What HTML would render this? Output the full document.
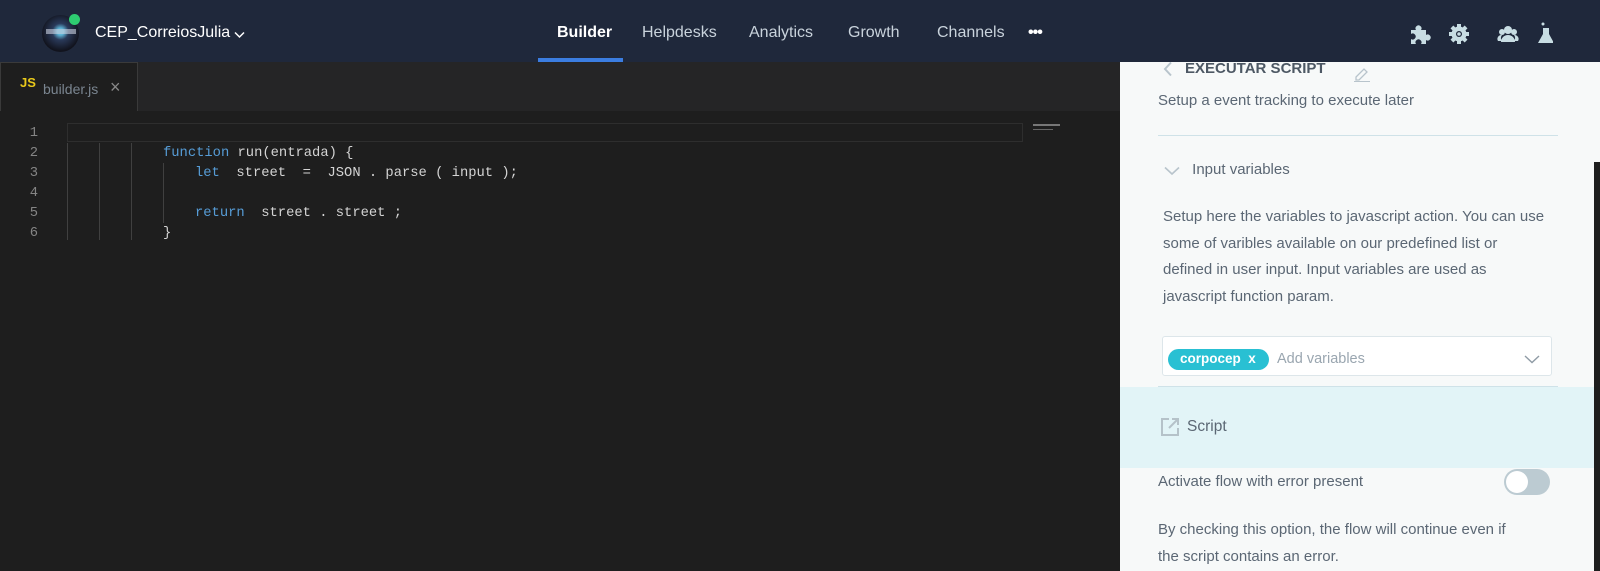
<!DOCTYPE html>
<html><head><meta charset="utf-8"><style>
*{margin:0;padding:0;box-sizing:border-box}
body{width:1600px;height:571px;overflow:hidden;background:#1e1e1e;font-family:"Liberation Sans",sans-serif;position:relative}
.a{position:absolute;white-space:nowrap}
.hdr{left:0;top:0;width:1600px;height:62px;background:#1f283b}
.nav{top:24px;font-size:16px;color:#c9d3dc}
.mono{font-family:"Liberation Mono",monospace;font-size:13.8px;color:#d4d4d4;white-space:pre}
.ln{color:#858585;width:24px;text-align:right;left:14px}
.kw{color:#569cd6}
.g{width:1px;background:#404040}
.p{color:#5b6774;font-size:15px}
</style></head><body>
<div class="a hdr"></div>
<div class="a" style="left:42px;top:15px;width:37px;height:37px;border-radius:50%;background:radial-gradient(circle at 50% 45%,#5fb6d8 0 12%,#2a3a5a 30%,#11131d 70%)"></div>
<div class="a" style="left:46px;top:29px;width:30px;height:5px;background:#c9d0e0;opacity:.6"></div>
<div class="a" style="left:69px;top:14px;width:11px;height:11px;border-radius:50%;background:#2ecc71"></div>
<div class="a" style="left:95px;top:24px;font-size:16px;color:#fff">CEP_CorreiosJulia</div>
<svg class="a" style="left:234px;top:31px" width="11" height="8"><path d="M1 1.5 L5.5 6 L10 1.5" stroke="#fff" stroke-width="1.5" fill="none"/></svg>
<div class="a nav" style="left:557px;color:#fff;font-weight:bold">Builder</div>
<div class="a" style="left:538px;top:58px;width:85px;height:4px;background:#3b7de0"></div>
<div class="a nav" style="left:642px">Helpdesks</div>
<div class="a nav" style="left:749px">Analytics</div>
<div class="a nav" style="left:848px">Growth</div>
<div class="a nav" style="left:937px">Channels</div>
<div class="a" style="left:1028px;top:24px;color:#fff;font-size:16px;font-weight:bold;letter-spacing:-1px">•••</div>
<!-- icons -->
<svg class="a" style="left:1408px;top:22px" width="145" height="24" fill="#c8dde3">
<path d="M3 8h5a3 3 0 1 1 5 0h5v5a3 3 0 1 1 0 5v4h-5a3 3 0 1 0-5 0H3v-5a3 3 0 1 0 0-5z"/>
<g transform="translate(51,12)"><circle r="7.5"/><g><rect x="-2" y="-10" width="4" height="20"/><rect x="-10" y="-2" width="20" height="4"/><rect x="-2" y="-10" width="4" height="20" transform="rotate(45)"/><rect x="-2" y="-10" width="4" height="20" transform="rotate(-45)"/></g><circle r="3" fill="#1f283b"/><circle r="1.8"/></g>
<g transform="translate(90,0)"><circle cx="10" cy="8" r="4"/><circle cx="4" cy="10" r="3"/><circle cx="16" cy="10" r="3"/><path d="M3 20a7 7 0 0 1 14 0z"/><path d="M0 19a4 4 0 0 1 4-6 5 5 0 0 0 0 6z"/><path d="M20 19a4 4 0 0 0-4-6 5 5 0 0 1 0 6z"/></g>
<g transform="translate(130,0)"><circle cx="5" cy="2" r="1.5"/><path d="M5 6h6v6l5 9H0l5-9z"/></g>
</svg>
<!-- editor tabs -->
<div class="a" style="left:0;top:62px;width:1120px;height:49px;background:#252526"></div>
<div class="a" style="left:0;top:62px;width:138px;height:49px;background:#1e1e1e;border:1px solid #3a3a3a;border-bottom:none"></div>
<div class="a" style="left:20px;top:75px;color:#e8c81a;font-weight:bold;font-size:13px">JS</div>
<div class="a" style="left:43px;top:81px;color:#7a8590;font-size:14px">builder.js</div>
<div class="a" style="left:110px;top:77px;color:#888;font-size:18px">×</div>
<div class="a" style="left:67px;top:123px;width:956px;height:19px;border:1px solid #2e2e2e"></div>
<div class="a g" style="left:67px;top:143px;height:97px"></div>
<div class="a g" style="left:99px;top:143px;height:97px"></div>
<div class="a g" style="left:131px;top:143px;height:97px"></div>
<div class="a g" style="left:163px;top:163px;height:60px"></div>
<div class="a mono ln" style="top:126px">1</div>
<div class="a mono ln" style="top:146px">2</div>
<div class="a mono ln" style="top:166px">3</div>
<div class="a mono ln" style="top:186px">4</div>
<div class="a mono ln" style="top:206px">5</div>
<div class="a mono ln" style="top:226px">6</div>
<div class="a mono" style="left:163px;top:146px"><span class="kw">function</span> run(entrada) {</div>
<div class="a mono" style="left:195px;top:166px"><span class="kw">let</span>  street  =  JSON . parse ( input );</div>
<div class="a mono" style="left:195px;top:206px"><span class="kw">return</span>  street . street ;</div>
<div class="a mono" style="left:163px;top:226px">}</div>
<div class="a" style="left:1033px;top:124px;width:27px;height:2px;background:#777"></div>
<div class="a" style="left:1033px;top:129px;width:20px;height:1px;background:#666"></div>
<!-- panel -->
<div class="a" style="left:1120px;top:62px;width:480px;height:509px;background:#f7f9f9"></div>
<div class="a" style="left:1594px;top:162px;width:6px;height:409px;background:#1e1e1e"></div>
<svg class="a" style="left:1162px;top:61px" width="12" height="16"><path d="M9 1.5 L3 8 L9 14.5" stroke="#b8c4cc" stroke-width="2" fill="none"/></svg>
<div class="a" style="left:1185px;top:60px;font-size:15px;font-weight:bold;color:#4d5864">EXECUTAR SCRIPT</div>
<svg class="a" style="left:1353px;top:66px" width="18" height="16"><path d="M3 11 L11 3 L14 6 L6 14 L3 14Z" stroke="#b8c4cc" stroke-width="1.3" fill="none"/><path d="M1 15.5h16" stroke="#b8c4cc"/></svg>
<div class="a p" style="left:1158px;top:92px">Setup a event tracking to execute later</div>
<div class="a" style="left:1158px;top:135px;width:400px;height:1px;background:#cfe2e8"></div>
<svg class="a" style="left:1164px;top:166px" width="16" height="10"><path d="M1 1.5 L8 8 L15 1.5" stroke="#b8c4cc" stroke-width="1.6" fill="none"/></svg>
<div class="a p" style="left:1163px;top:161px">&nbsp;&nbsp;&nbsp;&nbsp;&nbsp;&nbsp;&nbsp;Input variables</div>
<div class="a p" style="left:1163px;top:204px;white-space:normal;width:385px;line-height:26.7px">Setup here the variables to javascript action. You can use some of varibles available on our predefined list or defined in user input. Input variables are used as javascript function param.</div>
<div class="a" style="left:1162px;top:336px;width:390px;height:40px;background:#fff;border:1px solid #dde6ea;border-radius:3px"></div>
<div class="a" style="left:1168px;top:349px;width:101px;height:21px;border-radius:11px;background:#29c0d3;color:#fff;font-size:13.5px;font-weight:bold;padding:2px 0 0 12px">corpocep &nbsp;x</div>
<div class="a" style="left:1277px;top:351px;font-size:14.5px;color:#9aa6b0">Add variables</div>
<svg class="a" style="left:1524px;top:355px" width="16" height="9"><path d="M1 1 L8 7.5 L15 1" stroke="#8f9ba5" stroke-width="1.4" fill="none"/></svg>
<div class="a" style="left:1158px;top:386px;width:400px;height:1px;background:#cfe2e8"></div>
<div class="a" style="left:1120px;top:387px;width:474px;height:81px;background:#e2f4f7"></div>
<svg class="a" style="left:1160px;top:417px" width="20" height="20"><path d="M9 2H2v16h16v-7" stroke="#b5c2c9" stroke-width="2" fill="none"/><path d="M12 2h6v6M18 2 L9 11" stroke="#b5c2c9" stroke-width="2" fill="none"/></svg>
<div class="a p" style="left:1187px;top:418px;font-size:15.5px">Script</div>
<div class="a p" style="left:1158px;top:473px">Activate flow with error present</div>
<div class="a" style="left:1504px;top:469px;width:46px;height:26px;border-radius:13px;background:#bccbd2"></div>
<div class="a" style="left:1506px;top:471px;width:22px;height:22px;border-radius:50%;background:#fff"></div>
<div class="a p" style="left:1158px;top:517px;line-height:26.7px">By checking this option, the flow will continue even if<br>the script contains an error.</div>
</body></html>
